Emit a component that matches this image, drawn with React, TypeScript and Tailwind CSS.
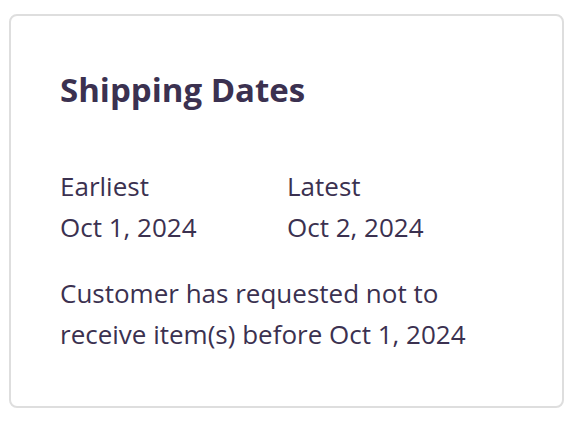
export default function App() {
  return (
    <div className="w-[572px] h-[422px] bg-white pt-[14px] pl-[9px]" style={{ fontFamily: '"Open Sans", Lato, sans-serif' }}>
      <div className="w-[555px] h-[394px] rounded-[8px] border-2 border-[#dedede] bg-white pl-[49px] pt-[56px] text-[#3b3150]">
        <h2 className="text-[33px] leading-[36px] font-bold">Shipping Dates</h2>
        <div className="mt-[58px] flex text-[26px] leading-[41px]">
          <div className="w-[227px]">
            <div>Earliest</div>
            <div>Oct 1, 2024</div>
          </div>
          <div>
            <div>Latest</div>
            <div>Oct 2, 2024</div>
          </div>
        </div>
        <p className="mt-[25px] text-[26px] leading-[41px]">
          Customer has requested not to
          <br />
          receive item(s) before Oct 1, 2024
        </p>
      </div>
    </div>
  );
}
